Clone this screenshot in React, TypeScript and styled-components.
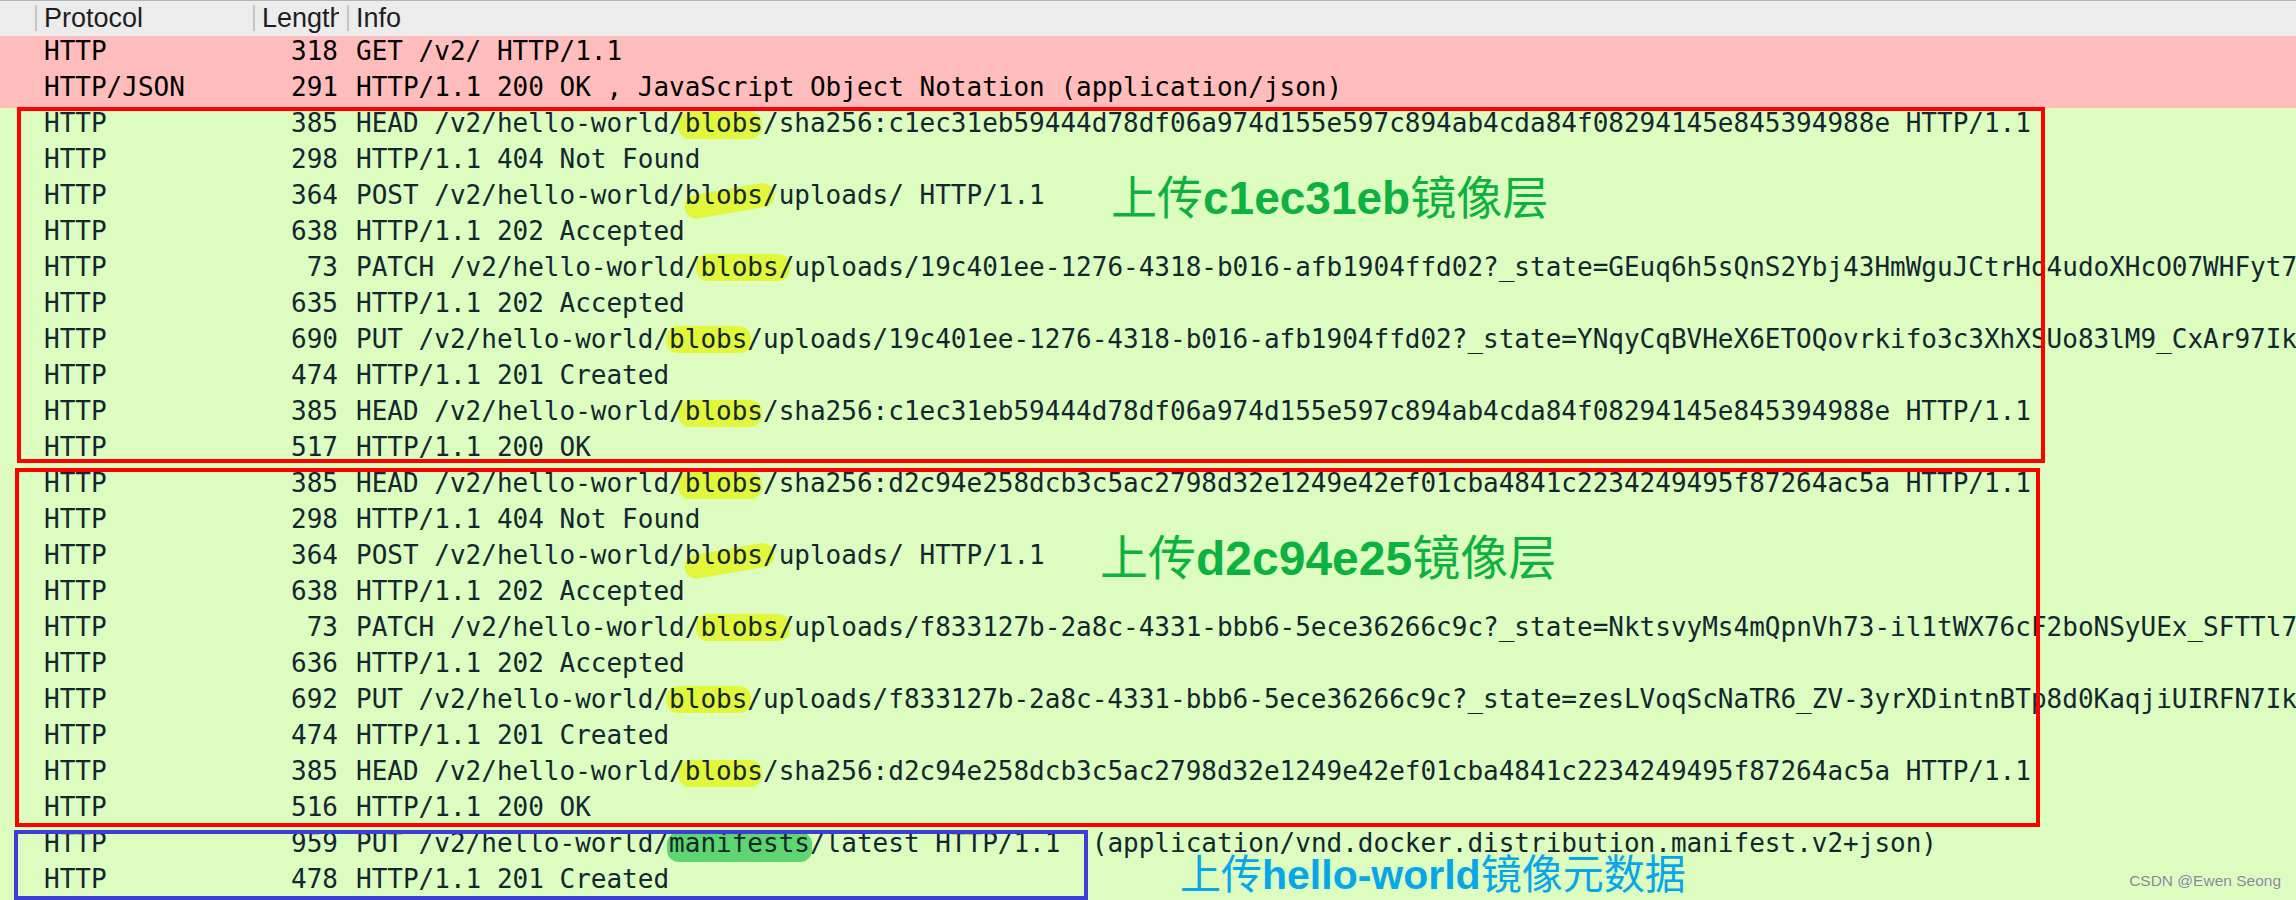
import React from "react";
import styled, { createGlobalStyle } from "styled-components";

const GlobalStyle = createGlobalStyle`
  html, body {
    margin: 0;
    padding: 0;
    background: #dcfcc0;
    overflow: hidden;
  }
`;

const COLS = "35px 218px 94px 1fr";

const Page = styled.div`
  position: relative;
  width: 2296px;
  height: 900px;
  overflow: hidden;
  background: #dcfcc0;
`;

const Header = styled.div`
  display: grid;
  grid-template-columns: ${COLS};
  height: 36px;
  box-sizing: border-box;
  background: #ececec;
  border-top: 1px solid #b4b4b4;
  font-family: "Liberation Sans", Arial, sans-serif;
  font-size: 27px;
  line-height: 35px;
  color: #1e1e1e;
`;

const HeadCell = styled.div<{ $sep?: boolean }>`
  display: flex;
  min-width: 0;
  padding: 0 8px 0 9px;
  background: ${(p) =>
    p.$sep ? "linear-gradient(#c6c6c6, #c6c6c6) left 4px / 2px 26px no-repeat" : "none"};
`;

const HeadLabel = styled.span`
  flex: 1;
  min-width: 0;
  overflow: hidden;
  white-space: nowrap;
`;

const Table = styled.div`
  display: flex;
  flex-direction: column;
`;

const Row = styled.div<{ $tone: "bad" | "ok" }>`
  display: grid;
  grid-template-columns: ${COLS};
  height: 36px;
  background: ${(p) => (p.$tone === "bad" ? "#ffbcbc" : "#dcfcc0")};
  color: ${(p) => (p.$tone === "bad" ? "#000000" : "#12272e")};
  font-family: "DejaVu Sans Mono", "Liberation Mono", monospace;
  font-size: 26px;
  line-height: 30px;
  white-space: pre;
`;

const Cell = styled.div<{ $right?: boolean }>`
  min-width: 0;
  padding: 0 9px;
  text-align: ${(p) => (p.$right ? "right" : "left")};
`;

type Stroke = { l: number; r: number; t: number; h: number; rot: number };

const Mark = styled.span<{ $c: string; $s: Stroke }>`
  position: relative;
  z-index: 0;

  &::before {
    content: "";
    position: absolute;
    z-index: -1;
    left: ${(p) => p.$s.l}px;
    right: ${(p) => p.$s.r}px;
    top: ${(p) => p.$s.t}px;
    height: ${(p) => p.$s.h}px;
    border-radius: 12px;
    background: ${(p) => p.$c};
    transform: rotate(${(p) => p.$s.rot}deg);
  }
`;

const Frame = styled.div<{ $c: string; $x: number; $y: number; $w: number; $h: number }>`
  position: absolute;
  left: ${(p) => p.$x}px;
  top: ${(p) => p.$y}px;
  width: ${(p) => p.$w}px;
  height: ${(p) => p.$h}px;
  box-sizing: border-box;
  border: 4px solid ${(p) => p.$c};
  pointer-events: none;
`;

const Note = styled.div<{ $c: string; $x: number; $y: number; $size: number }>`
  position: absolute;
  left: ${(p) => p.$x}px;
  top: ${(p) => p.$y}px;
  font-family: "Liberation Sans", "Noto Sans CJK SC", sans-serif;
  font-size: ${(p) => p.$size}px;
  line-height: 1;
  white-space: nowrap;
  color: ${(p) => p.$c};

  b {
    font-weight: 700;
  }
`;

const Watermark = styled.div`
  position: absolute;
  right: 15px;
  bottom: 12px;
  font-family: "Liberation Sans", Arial, sans-serif;
  font-size: 15.5px;
  line-height: 1;
  color: #8a8a8a;
  text-shadow: 0 0 2px rgba(255, 255, 255, 0.8);
`;

const YELLOW = "#e2f63c";
const GREEN = "#5fd570";

const strokes: Record<string, Stroke> = {
  HEAD: { l: 9, r: 17, t: 4, h: 27, rot: 0 },
  POST: { l: 15, r: 4, t: 9, h: 24, rot: -10 },
  PATCH: { l: 11, r: 4, t: 2, h: 27, rot: 0 },
  PUT: { l: 13, r: 12, t: 2, h: 27, rot: 0 },
};

const blobs = (verb: string, rest: string) => (
  <>
    {verb} /v2/hello-world
    <Mark $c={YELLOW} $s={strokes[verb]}>/blobs/</Mark>
    {rest}
  </>
);

const layerA = "c1ec31eb59444d78df06a974d155e597c894ab4cda84f08294145e845394988e";
const layerB = "d2c94e258dcb3c5ac2798d32e1249e42ef01cba4841c2234249495f87264ac5a";
const upA = "19c401ee-1276-4318-b016-afb1904ffd02";
const upB = "f833127b-2a8c-4331-bbb6-5ece36266c9c";

type Packet = { proto: string; len: number; info: React.ReactNode; tone: "bad" | "ok" };

const packets: Packet[] = [
  { proto: "HTTP", len: 318, info: "GET /v2/ HTTP/1.1", tone: "bad" },
  {
    proto: "HTTP/JSON",
    len: 291,
    info: "HTTP/1.1 200 OK , JavaScript Object Notation (application/json)",
    tone: "bad",
  },
  { proto: "HTTP", len: 385, info: blobs("HEAD", `sha256:${layerA} HTTP/1.1`), tone: "ok" },
  { proto: "HTTP", len: 298, info: "HTTP/1.1 404 Not Found", tone: "ok" },
  { proto: "HTTP", len: 364, info: blobs("POST", "uploads/ HTTP/1.1"), tone: "ok" },
  { proto: "HTTP", len: 638, info: "HTTP/1.1 202 Accepted", tone: "ok" },
  {
    proto: "HTTP",
    len: 73,
    info: blobs("PATCH", `uploads/${upA}?_state=GEuq6h5sQnS2Ybj43HmWguJCtrHo4udoXHcO07WHFyt7IkNh`),
    tone: "ok",
  },
  { proto: "HTTP", len: 635, info: "HTTP/1.1 202 Accepted", tone: "ok" },
  {
    proto: "HTTP",
    len: 690,
    info: blobs("PUT", `uploads/${upA}?_state=YNqyCqBVHeX6ETOQovrkifo3c3XhXSUo83lM9_CxAr97IkNh`),
    tone: "ok",
  },
  { proto: "HTTP", len: 474, info: "HTTP/1.1 201 Created", tone: "ok" },
  { proto: "HTTP", len: 385, info: blobs("HEAD", `sha256:${layerA} HTTP/1.1`), tone: "ok" },
  { proto: "HTTP", len: 517, info: "HTTP/1.1 200 OK", tone: "ok" },
  { proto: "HTTP", len: 385, info: blobs("HEAD", `sha256:${layerB} HTTP/1.1`), tone: "ok" },
  { proto: "HTTP", len: 298, info: "HTTP/1.1 404 Not Found", tone: "ok" },
  { proto: "HTTP", len: 364, info: blobs("POST", "uploads/ HTTP/1.1"), tone: "ok" },
  { proto: "HTTP", len: 638, info: "HTTP/1.1 202 Accepted", tone: "ok" },
  {
    proto: "HTTP",
    len: 73,
    info: blobs("PATCH", `uploads/${upB}?_state=NktsvyMs4mQpnVh73-il1tWX76cF2boNSyUEx_SFTTl7Ik`),
    tone: "ok",
  },
  { proto: "HTTP", len: 636, info: "HTTP/1.1 202 Accepted", tone: "ok" },
  {
    proto: "HTTP",
    len: 692,
    info: blobs("PUT", `uploads/${upB}?_state=zesLVoqScNaTR6_ZV-3yrXDintnBTp8d0KaqjiUIRFN7IkNh`),
    tone: "ok",
  },
  { proto: "HTTP", len: 474, info: "HTTP/1.1 201 Created", tone: "ok" },
  { proto: "HTTP", len: 385, info: blobs("HEAD", `sha256:${layerB} HTTP/1.1`), tone: "ok" },
  { proto: "HTTP", len: 516, info: "HTTP/1.1 200 OK", tone: "ok" },
  {
    proto: "HTTP",
    len: 959,
    info: (
      <>
        PUT /v2/hello-world/
        <Mark $c={GREEN} $s={{ l: -2, r: -2, t: 4, h: 30, rot: 0 }}>manifests</Mark>
        /latest HTTP/1.1  (application/vnd.docker.distribution.manifest.v2+json)
      </>
    ),
    tone: "ok",
  },
  { proto: "HTTP", len: 478, info: "HTTP/1.1 201 Created", tone: "ok" },
];

const App: React.FC = () => {
  return (
    <Page>
      <GlobalStyle />
      <Header>
        <HeadCell />
        <HeadCell $sep>
          <HeadLabel>Protocol</HeadLabel>
        </HeadCell>
        <HeadCell $sep>
          <HeadLabel>Length</HeadLabel>
        </HeadCell>
        <HeadCell $sep>
          <HeadLabel>Info</HeadLabel>
        </HeadCell>
      </Header>
      <Table>
        {packets.map((p, i) => (
          <Row key={i} $tone={p.tone}>
            <Cell />
            <Cell>{p.proto}</Cell>
            <Cell $right>{p.len}</Cell>
            <Cell>{p.info}</Cell>
          </Row>
        ))}
      </Table>

      {/* hand-drawn annotations on top of the capture */}
      <Frame $c="#ff0000" $x={17} $y={107} $w={2028} $h={356} />
      <Frame $c="#ff0000" $x={15} $y={468} $w={2025} $h={359} />
      <Frame $c="#3b3fd6" $x={14} $y={830} $w={1074} $h={70} />

      <Note $c="#0cb13f" $x={1111} $y={175} $size={46}>
        上传<b>c1ec31eb</b>镜像层
      </Note>
      <Note $c="#0cb13f" $x={1100} $y={535} $size={48}>
        上传<b>d2c94e25</b>镜像层
      </Note>
      <Note $c="#07a6e8" $x={1180} $y={855} $size={41}>
        上传<b>hello-world</b>镜像元数据
      </Note>

      <Watermark>CSDN @Ewen Seong</Watermark>
    </Page>
  );
};

export default App;
